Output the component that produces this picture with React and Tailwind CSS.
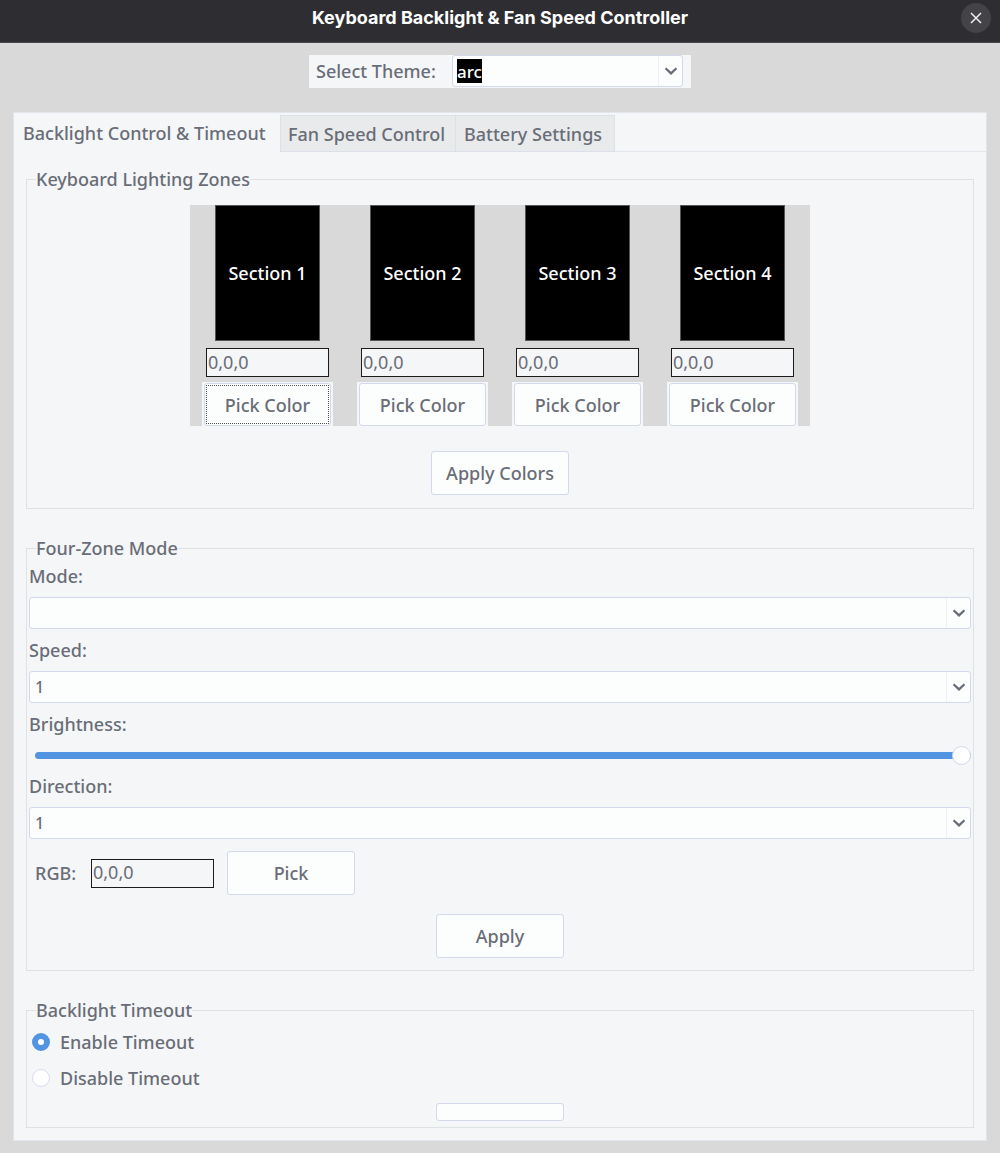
import { useState } from "react";

const ZONES = [1, 2, 3, 4];

function Chevron() {
  return (
    <svg className="h-2 w-3" viewBox="0 0 12 8" fill="none" aria-hidden="true">
      <path d="M.6 1.2 6 6.4 11.4 1.2" stroke="#696d77" strokeWidth="2.2" />
    </svg>
  );
}

function Button({ children, className = "", ...props }) {
  return (
    <button
      type="button"
      className={`rounded-[3px] border border-[#d3d8ea] bg-[#fcfdfd] ${className}`}
      {...props}
    >
      {children}
    </button>
  );
}

function Group({ title, children, className = "" }) {
  return (
    <fieldset className={`min-w-0 border border-[#dfe2e4] px-px ${className}`}>
      <legend className="ml-2 leading-6">{title}</legend>
      {children}
    </fieldset>
  );
}

function Field({ id, label, options, initial }) {
  const [value, setValue] = useState(initial);
  return (
    <>
      <label htmlFor={id} className="leading-[26px]">{label}</label>
      <div className="relative">
        <select
          id={id}
          value={value}
          onChange={(e) => setValue(e.target.value)}
          className="block h-8 w-full appearance-none rounded-[3px] border border-[#d3d8ea] bg-[#fcfdfd] px-[5px] text-base font-medium"
        >
          {options.map((o) => (
            <option key={o} value={o}>{o}</option>
          ))}
        </select>
        <span className="pointer-events-none absolute inset-y-px right-px flex w-6 items-center justify-center border-l border-[#eef0f4]">
          <Chevron />
        </span>
      </div>
    </>
  );
}

function RgbEntry(props) {
  return (
    <input
      type="text"
      defaultValue="0,0,0"
      className="h-[29px] w-[123px] border border-[#1c1c1c] bg-[#f5f6f7] px-px pb-[2px] font-normal outline-none"
      {...props}
    />
  );
}

export default function App() {
  const [timeout, setTimeoutMode] = useState("enable");
  const [brightness, setBrightness] = useState(100);
  const [theme, setTheme] = useState("arc");

  return (
    <div className="min-h-screen bg-[#d9d9d9] pb-[12px] font-['Noto_Sans',sans-serif] text-lg font-medium text-[#696d77]">
      <header className="flex h-[43px] items-start border-b border-[#4a474d] bg-[#2e2d32] px-[9px] pt-[3px]">
        <span className="w-[30px]" />
        <h1 className="flex-1 text-center font-['Inter',sans-serif] text-lg leading-[30px] font-bold text-white [font-optical-sizing:none]">
          Keyboard Backlight &amp; Fan Speed Controller
        </h1>
        <button
          type="button"
          aria-label="Close"
          className="flex size-[30px] items-center justify-center rounded-full bg-[#444348]"
        >
          <svg className="size-3" viewBox="0 0 12 12" aria-hidden="true">
            <path d="M1 1 11 11M11 1 1 11" stroke="#eee" strokeWidth="1.5" />
          </svg>
        </button>
      </header>

      <main className="px-[13px] pt-3">
        <div className="mx-auto flex h-[33px] w-[382px] items-start bg-[#f5f6f7] pr-2 pl-[7px]">
          <label htmlFor="theme" className="w-[136px] leading-8">Select Theme:</label>
          <div className="flex h-8 flex-1 items-center rounded-[3px] border border-[#d3d8ea] bg-[#fcfdfd] pl-1">
            <select
              id="theme"
              value={theme}
              onChange={(e) => setTheme(e.target.value)}
              className="h-6 appearance-none bg-black text-[17px] font-medium text-white outline-none [field-sizing:content]"
            >
              <option className="bg-white text-black">arc</option>
            </select>
            <span className="ml-auto flex h-full w-6 items-center justify-center border-l border-[#eef0f4]">
              <Chevron />
            </span>
          </div>
        </div>

        <section className="mt-6 border border-[#e1e5ec] bg-[#f5f6f7] pb-3">
          <div role="tablist" className="flex h-[39px] items-end">
            <button type="button" role="tab" aria-selected="true" className="h-full w-[266px] pr-[10px] pl-[9px] text-left leading-[38px] whitespace-nowrap">
              Backlight Control &amp; Timeout
            </button>
            <button type="button" role="tab" aria-selected="false" className="h-[37px] w-[176px] border border-[#dce1e9] bg-[#e8eaeb] pl-[7px] text-left whitespace-nowrap">
              Fan Speed Control
            </button>
            <button type="button" role="tab" aria-selected="false" className="h-[37px] w-[159px] border border-l-0 border-[#dce1e9] bg-[#e8eaeb] pl-2 text-left whitespace-nowrap">
              Battery Settings
            </button>
            <span className="h-full flex-1 border-b border-[#e1e5ec]" />
          </div>

          <div className="px-3 pt-[15px]">
            <Group title="Keyboard Lighting Zones" className="pb-[13px]">
              <div className="mx-auto mt-[14px] grid w-[620px] grid-cols-4 bg-[#d9d9d9]">
                {ZONES.map((n) => (
                  <div key={n} className="flex flex-col items-center">
                    <div className="flex h-[136px] w-[105px] items-center justify-center border border-[#555] bg-black text-white">
                      Section {n}
                    </div>
                    <div className="mt-[7px] flex">
                      <RgbEntry aria-label={`Section ${n} RGB`} />
                    </div>
                    <div className="mt-[5px] bg-[#f5f6f7] px-[2px] pt-px">
                      <Button className="h-[43px] w-[127px] p-px">
                        <span
                          className={
                            n === 1
                              ? "flex h-full items-center justify-center border border-dotted border-[#555]"
                              : "flex h-full items-center justify-center"
                          }
                        >
                          Pick Color
                        </span>
                      </Button>
                    </div>
                  </div>
                ))}
              </div>
              <Button className="mx-auto mt-[25px] block h-11 w-[138px]">Apply Colors</Button>
            </Group>

            <Group title="Four-Zone Mode" className="mt-[27px] pb-3">
              <div className="flex flex-col gap-2 px-px pt-[3px]">
                <Field id="mode" label="Mode:" initial="" options={["", "Static", "Breath", "Wave"]} />
                <Field id="speed" label="Speed:" initial="1" options={["1", "2", "3", "4", "5"]} />
                <label htmlFor="brightness" className="leading-[26px]">Brightness:</label>
                <input
                  id="brightness"
                  type="range"
                  min="0"
                  max="100"
                  value={brightness}
                  onChange={(e) => setBrightness(Number(e.target.value))}
                  style={{ "--fill": `${brightness}%` }}
                  className="ml-[6px] block h-5 appearance-none bg-transparent [&::-webkit-slider-runnable-track]:h-[7px] [&::-webkit-slider-runnable-track]:rounded-full [&::-webkit-slider-runnable-track]:bg-[linear-gradient(to_right,#5294e2_var(--fill),#cfd6e6_var(--fill))] [&::-webkit-slider-thumb]:-mt-[6px] [&::-webkit-slider-thumb]:size-[19px] [&::-webkit-slider-thumb]:appearance-none [&::-webkit-slider-thumb]:rounded-full [&::-webkit-slider-thumb]:border [&::-webkit-slider-thumb]:border-[#d3d8ea] [&::-webkit-slider-thumb]:bg-white"
                />
                <Field id="direction" label="Direction:" initial="1" options={["1", "2"]} />
              </div>
              <div className="mt-3 flex items-center pl-[7px]">
                <label htmlFor="rgb" className="w-14">RGB:</label>
                <RgbEntry id="rgb" />
                <Button className="ml-[13px] h-11 w-32">Pick</Button>
              </div>
              <Button className="mx-auto mt-[19px] block h-11 w-32">Apply</Button>
            </Group>

            <Group title="Backlight Timeout" className="mt-[27px] pb-[6px]">
              <div className="flex flex-col pt-[2px] pl-1">
                {[
                  ["enable", "Enable Timeout"],
                  ["disable", "Disable Timeout"],
                ].map(([key, label]) => (
                  <label key={key} className="flex h-9 items-center gap-[10px]">
                    <input
                      type="radio"
                      name="timeout"
                      checked={timeout === key}
                      onChange={() => setTimeoutMode(key)}
                      className="size-[18px] appearance-none rounded-full border border-[#d8dcec] bg-white checked:border-[6px] checked:border-[#5294e2]"
                    />
                    {label}
                  </label>
                ))}
              </div>
              <Button aria-label="Apply timeout" className="mx-auto mt-[7px] block h-[18px] w-32" />
            </Group>
          </div>
        </section>
      </main>
    </div>
  );
}
